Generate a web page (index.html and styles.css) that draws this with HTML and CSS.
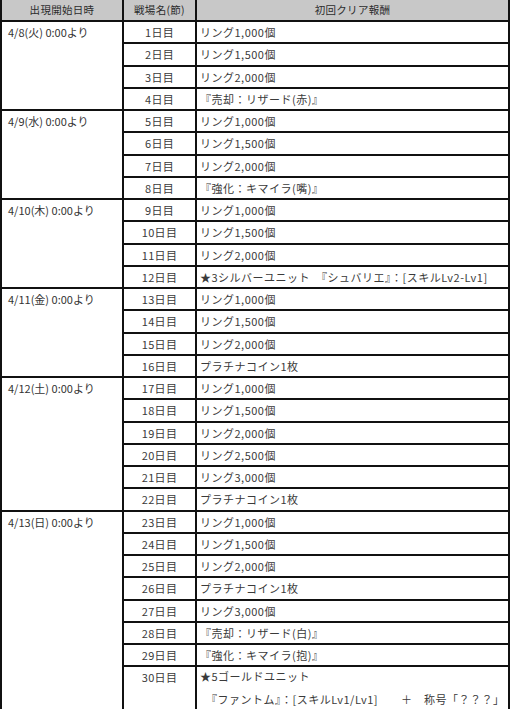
FILE: index.html
```html
<!DOCTYPE html>
<html lang="ja">
<head>
<meta charset="utf-8">
<title>初回クリア報酬</title>
<link rel="stylesheet" href="styles.css">
</head>
<body>
<div class="sheet">
  <div class="hd">出現開始日時</div>
  <div class="hd">戦場名(節)</div>
  <div class="hd">初回クリア報酬</div>

  <div class="date span4">4/8(火) 0:00より</div>
  <div class="day">1日目</div><div class="rw">リング1,000個</div>
  <div class="day">2日目</div><div class="rw">リング1,500個</div>
  <div class="day">3日目</div><div class="rw">リング2,000個</div>
  <div class="day">4日目</div><div class="rw">『売却：リザード(赤)』</div>

  <div class="date span4">4/9(水) 0:00より</div>
  <div class="day">5日目</div><div class="rw">リング1,000個</div>
  <div class="day">6日目</div><div class="rw">リング1,500個</div>
  <div class="day">7日目</div><div class="rw">リング2,000個</div>
  <div class="day">8日目</div><div class="rw">『強化：キマイラ(嘴)』</div>

  <div class="date span4">4/10(木) 0:00より</div>
  <div class="day">9日目</div><div class="rw">リング1,000個</div>
  <div class="day">10日目</div><div class="rw">リング1,500個</div>
  <div class="day">11日目</div><div class="rw">リング2,000個</div>
  <div class="day">12日目</div><div class="rw">★3シルバーユニット　『シュバリエ』：[スキルLv2-Lv1]</div>

  <div class="date span4">4/11(金) 0:00より</div>
  <div class="day">13日目</div><div class="rw">リング1,000個</div>
  <div class="day">14日目</div><div class="rw">リング1,500個</div>
  <div class="day">15日目</div><div class="rw">リング2,000個</div>
  <div class="day">16日目</div><div class="rw">プラチナコイン1枚</div>

  <div class="date span6">4/12(土) 0:00より</div>
  <div class="day">17日目</div><div class="rw">リング1,000個</div>
  <div class="day">18日目</div><div class="rw">リング1,500個</div>
  <div class="day">19日目</div><div class="rw">リング2,000個</div>
  <div class="day">20日目</div><div class="rw">リング2,500個</div>
  <div class="day">21日目</div><div class="rw">リング3,000個</div>
  <div class="day">22日目</div><div class="rw">プラチナコイン1枚</div>

  <div class="date span8">4/13(日) 0:00より</div>
  <div class="day">23日目</div><div class="rw">リング1,000個</div>
  <div class="day">24日目</div><div class="rw">リング1,500個</div>
  <div class="day">25日目</div><div class="rw">リング2,000個</div>
  <div class="day">26日目</div><div class="rw">プラチナコイン1枚</div>
  <div class="day">27日目</div><div class="rw">リング3,000個</div>
  <div class="day">28日目</div><div class="rw">『売却：リザード(白)』</div>
  <div class="day">29日目</div><div class="rw">『強化：キマイラ(抱)』</div>
  <div class="day">30日目</div>
  <div class="rw multi">
    <div class="l1">★5ゴールドユニット</div>
    <div class="l2">　『ファントム』：[スキルLv1/Lv1]　　＋　称号「？？？」</div>
  </div>
</div>
</body>
</html>
```
FILE: styles.css
```css
html, body {
  margin: 0;
  padding: 0;
  background: #fff;
  height: 709px;
  overflow: hidden;
}

.sheet {
  box-sizing: border-box;
  width: 510px;
  display: grid;
  grid-template-columns: 120px 71px 311px;
  grid-template-rows: 20px repeat(29, 20.25px) 60px;
  gap: 2px;
  padding: 0 2px;
  background: #111;
  font-family: "Noto Sans CJK JP", "Noto Sans", sans-serif;
  font-size: 11px;
  color: #3a3a3a;
  line-height: 20.25px;
}

.sheet > div {
  background: #fff;
  white-space: nowrap;
  overflow: hidden;
}

.sheet > .hd {
  background: #c8c8c8;
  text-align: center;
  line-height: 20px;
  color: #2c2c2c;
  font-size: 10.5px;
  letter-spacing: 0.3px;
}

.date {
  padding-left: 6px;
  color: #333;
}

.span4 { grid-row: span 4; }
.span6 { grid-row: span 6; }
.span8 { grid-row: span 8; }

.day {
  text-align: center;
  letter-spacing: 0.3px;
}

.rw {
  padding-left: 3px;
  letter-spacing: 0.5px;
}

.multi .l1 {
  line-height: 19px;
}

.multi .l2 {
  line-height: 26px;
}
```
